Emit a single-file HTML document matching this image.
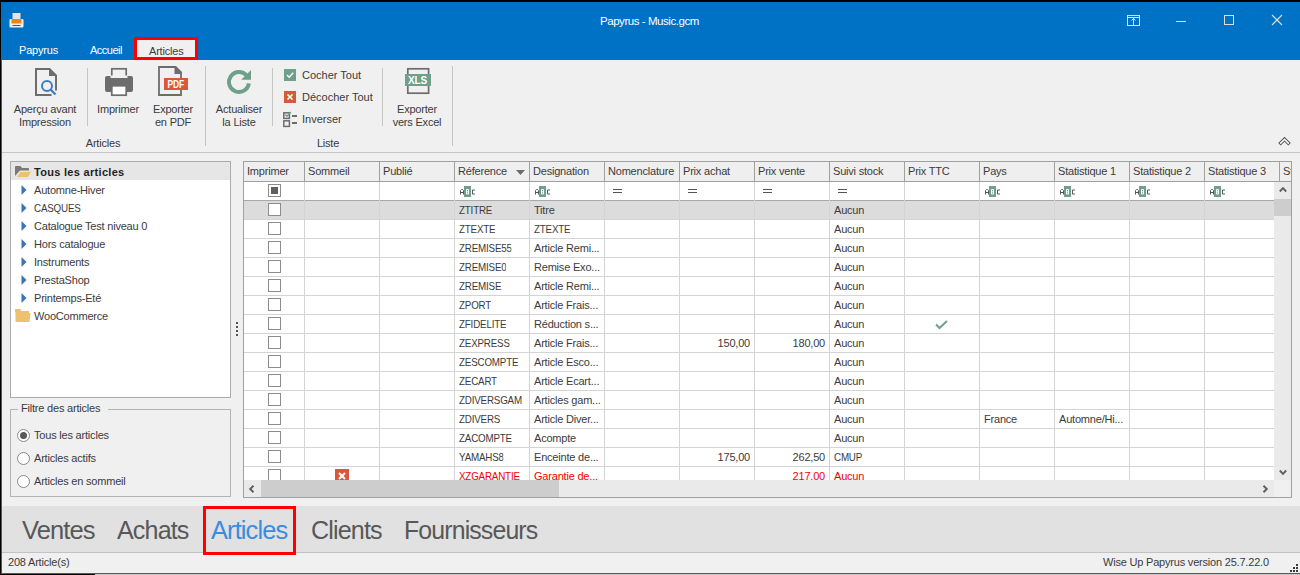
<!DOCTYPE html><html><head><meta charset="utf-8"><style>
*{margin:0;padding:0;box-sizing:border-box}
html,body{width:1300px;height:575px;overflow:hidden;background:#000}
body{font-family:"Liberation Sans",sans-serif;font-size:11px;color:#3B3B3B;position:relative;letter-spacing:-0.2px}
.a{position:absolute;white-space:nowrap}
.rl{text-align:center;line-height:13px}
.c{position:absolute;white-space:nowrap;overflow:hidden;line-height:19px;height:19px;padding-top:1px}
.cb{position:absolute;width:13px;height:13px;border:1px solid #8C8C8C;background:#fff}
.vl{position:absolute;width:1px;background:#D4D4D4}
.hl{position:absolute;height:1px;background:#D4D4D4}
.u{transform:scaleX(.89);transform-origin:0 0}
.sep{position:absolute;width:1px;background:#C6C6C6}
svg{position:absolute;overflow:visible}
</style></head><body>
<div class="a" style="left:1px;top:2px;width:1299px;height:572px;background:#0072C6"></div>
<div class="a" style="left:95px;top:574px;width:1205px;height:1px;background:#C8C4C0"></div>
<div class="a" style="left:0;top:0;width:1px;height:575px;background:#000"></div>
<div class="a" style="left:600px;top:15px;color:#fff;font-size:11.5px;letter-spacing:-0.45px">Papyrus - Music.gcm</div>
<svg style="left:9px;top:13px" width="15" height="15" viewBox="0 0 15 15">
<rect x="3.5" y="0" width="8" height="6" fill="#E4E4E4"/>
<rect x="0.5" y="6" width="14" height="8.5" rx="1" fill="#EFEFEF"/>
<rect x="2.5" y="6" width="10" height="4.5" fill="#E38A12"/>
<rect x="3.5" y="12" width="8" height="1" fill="#555"/>
</svg>
<svg style="left:1127px;top:15px" width="13" height="11" viewBox="0 0 13 11">
<rect x="0.5" y="0.5" width="12" height="10" fill="none" stroke="#E4DDD6" stroke-width="1"/>
<line x1="0.5" y1="2.5" x2="12.5" y2="2.5" stroke="#E4DDD6"/>
<line x1="6.5" y1="3" x2="6.5" y2="10.5" stroke="#E4DDD6"/>
<polyline points="4.5,5.5 6.5,3.5 8.5,5.5" fill="none" stroke="#E4DDD6"/>
</svg>
<div class="a" style="left:1176px;top:21px;width:10px;height:1px;background:#E4DDD6"></div>
<div class="a" style="left:1224px;top:15px;width:10px;height:10px;border:1px solid #E4DDD6"></div>
<svg style="left:1272px;top:15px" width="10" height="10" viewBox="0 0 10 10">
<line x1="0" y1="0" x2="10" y2="10" stroke="#E4DDD6" stroke-width="1.1"/>
<line x1="10" y1="0" x2="0" y2="10" stroke="#E4DDD6" stroke-width="1.1"/>
</svg>
<div class="a" style="left:19px;top:44px;color:#fff">Papyrus</div>
<div class="a" style="left:90px;top:44px;color:#fff;letter-spacing:-0.5px">Accueil</div>
<div class="a" style="left:134px;top:37px;width:64px;height:23px;background:#F0F0F0;border:3px solid #FF0000"></div>
<div class="a" style="left:149px;top:45px">Articles</div>
<div class="a" style="left:2px;top:60px;width:1298px;height:93px;background:#F0F0F0;border-bottom:1px solid #C6C6C6"></div>
<div class="a" style="left:2px;top:153px;width:1298px;height:353px;background:#F0F0F0"></div>
<div class="a" style="left:2px;top:506px;width:1298px;height:47px;background:#E1E1E1;border-bottom:1px solid #C2C2C2"></div>
<div class="a" style="left:2px;top:553px;width:1298px;height:20px;background:#F0F0F0"></div>
<svg style="left:35px;top:68px" width="22" height="28" viewBox="0 0 22 28">
<path d="M16.5,27 H1 V1 H14.5 L21,7.5 V22.5" fill="none" stroke="#6D6D6D" stroke-width="2"/>
<path d="M14,0 V8 H22 Z" fill="#6D6D6D"/>
<circle cx="12" cy="18" r="5" fill="none" stroke="#3C7DC4" stroke-width="2"/>
<line x1="15.3" y1="21.3" x2="20.5" y2="26.5" stroke="#3C7DC4" stroke-width="2.3"/>
</svg>
<div class="sep" style="left:87px;top:68px;height:58px"></div>
<svg style="left:105px;top:68px" width="28" height="28" viewBox="0 0 28 28">
<rect x="6.8" y="0.8" width="14.4" height="9" fill="none" stroke="#6D6D6D" stroke-width="1.7"/>
<rect x="0" y="8" width="28" height="16" rx="2" fill="#6D6D6D"/>
<rect x="5.5" y="7.5" width="17" height="2.5" fill="#F0F0F0"/>
<rect x="6.8" y="17.8" width="14.4" height="9.4" fill="#fff" stroke="#6D6D6D" stroke-width="1.7"/>
</svg>
<svg style="left:158px;top:66px" width="31" height="30" viewBox="0 0 31 30">
<path d="M1,1 H17 L23,7 V29 H1 Z" fill="none" stroke="#6D6D6D" stroke-width="1.8"/>
<path d="M16.5,0 H18 L24,6 V8 H16.5 Z" fill="#6D6D6D"/>
<rect x="6" y="12" width="24" height="12" fill="#D9583B"/>
<text x="9.6" y="22" font-family="Liberation Sans" font-weight="bold" font-size="10.5" fill="#fff" textLength="16.5" lengthAdjust="spacingAndGlyphs">PDF</text>
</svg>
<div class="a rl" style="left:5px;top:103px;width:80px">Aperçu avant<br>Impression</div>
<div class="a rl" style="left:88px;top:103px;width:60px">Imprimer</div>
<div class="a rl" style="left:143px;top:103px;width:60px">Exporter<br>en PDF</div>
<div class="a rl" style="left:63px;top:137px;width:80px">Articles</div>
<div class="sep" style="left:205px;top:66px;height:80px"></div>
<svg style="left:226px;top:69px" width="26" height="26" viewBox="0 0 26 26">
<path d="M22.9,14.4 A10,10 0 1 1 20.7,6.6" fill="none" stroke="#6FA08B" stroke-width="3.9"/>
<path d="M25,1 V10.8 H15.2 Z" fill="#6FA08B"/>
</svg>
<div class="a rl" style="left:209px;top:103px;width:60px">Actualiser<br>la Liste</div>
<div class="sep" style="left:272px;top:68px;height:58px"></div>
<svg style="left:284px;top:69px" width="12" height="12" viewBox="0 0 12 12">
<rect width="12" height="12" fill="#6FA08B"/>
<polyline points="3,6 5.2,8.2 9.2,3.8" fill="none" stroke="#fff" stroke-width="1.4"/>
</svg>
<svg style="left:284px;top:91px" width="12" height="12" viewBox="0 0 12 12">
<rect width="12" height="12" fill="#D9583B"/>
<line x1="3.5" y1="3.5" x2="8.5" y2="8.5" stroke="#fff" stroke-width="1.6"/>
<line x1="8.5" y1="3.5" x2="3.5" y2="8.5" stroke="#fff" stroke-width="1.6"/>
</svg>
<svg style="left:283px;top:112px" width="15" height="16" viewBox="0 0 15 16">
<rect x="0.8" y="0.8" width="5.6" height="5.6" fill="none" stroke="#6D6D6D" stroke-width="1.5"/>
<polyline points="2.3,2.5 4,4.3 7.8,0" fill="none" stroke="#6FA08B" stroke-width="1.4"/>
<rect x="0.8" y="8.8" width="5.6" height="5.6" fill="none" stroke="#6D6D6D" stroke-width="1.5"/>
<rect x="9" y="3" width="5" height="2" fill="#6D6D6D"/>
<rect x="9" y="10" width="5" height="2" fill="#6D6D6D"/>
</svg>
<div class="a" style="left:302px;top:69px;letter-spacing:0">Cocher Tout</div>
<div class="a" style="left:302px;top:91px;letter-spacing:0">Décocher Tout</div>
<div class="a" style="left:302px;top:113px;letter-spacing:0">Inverser</div>
<div class="a rl" style="left:288px;top:137px;width:80px">Liste</div>
<div class="sep" style="left:382px;top:68px;height:58px"></div>
<svg style="left:405px;top:68px" width="27" height="26" viewBox="0 0 27 26">
<rect x="2.8" y="0.8" width="20.8" height="24.4" fill="none" stroke="#6D6D6D" stroke-width="1.7"/>
<rect x="0" y="6" width="26" height="12" fill="#6FA08B"/>
<text x="3" y="15.8" font-family="Liberation Sans" font-weight="bold" font-size="10.5" fill="#fff" textLength="19" lengthAdjust="spacingAndGlyphs">XLS</text>
</svg>
<div class="a rl" style="left:382px;top:103px;width:70px">Exporter<br>vers Excel</div>
<div class="sep" style="left:452px;top:66px;height:80px"></div>
<svg style="left:1278px;top:136px" width="13" height="10" viewBox="0 0 13 10">
<polyline points="2.7,7.1 6.5,3.3 10.3,7.1" fill="none" stroke="#555" stroke-width="3.5" stroke-linecap="square"/>
<polyline points="2.7,7.1 6.5,3.3 10.3,7.1" fill="none" stroke="#fff" stroke-width="1.5" stroke-linecap="square"/>
</svg>
<div class="a" style="left:10px;top:161px;width:221px;height:237px;background:#fff;border:1px solid #ABABAB"></div>
<div class="a" style="left:11px;top:162px;width:219px;height:18px;background:#E6E6E6"></div>
<svg style="left:15px;top:166px" width="16" height="11" viewBox="0 0 16 11">
<path d="M0,1 Q0,0 1,0 H5.5 L7,2 H13 Q14,2 14,3 V4.5 H5 L0,10 Z" fill="#7A7A7A"/>
<path d="M5.5,6 H16 L13,11 H2 Z" fill="#EDC16E"/>
</svg>
<div class="a" style="left:34px;top:166px;font-weight:bold;letter-spacing:0.3px;color:#1E1E1E">Tous les articles</div>
<svg style="left:21px;top:185px" width="6" height="10" viewBox="0 0 6 10"><path d="M0.5,0 L5.5,5 L0.5,10 Z" fill="#3D73B5"/></svg>
<div class="a" style="left:34px;top:184px">Automne-Hiver</div>
<svg style="left:21px;top:203px" width="6" height="10" viewBox="0 0 6 10"><path d="M0.5,0 L5.5,5 L0.5,10 Z" fill="#3D73B5"/></svg>
<div class="a u" style="left:34px;top:202px">CASQUES</div>
<svg style="left:21px;top:221px" width="6" height="10" viewBox="0 0 6 10"><path d="M0.5,0 L5.5,5 L0.5,10 Z" fill="#3D73B5"/></svg>
<div class="a" style="left:34px;top:220px">Catalogue Test niveau 0</div>
<svg style="left:21px;top:239px" width="6" height="10" viewBox="0 0 6 10"><path d="M0.5,0 L5.5,5 L0.5,10 Z" fill="#3D73B5"/></svg>
<div class="a" style="left:34px;top:238px">Hors catalogue</div>
<svg style="left:21px;top:257px" width="6" height="10" viewBox="0 0 6 10"><path d="M0.5,0 L5.5,5 L0.5,10 Z" fill="#3D73B5"/></svg>
<div class="a" style="left:34px;top:256px">Instruments</div>
<svg style="left:21px;top:275px" width="6" height="10" viewBox="0 0 6 10"><path d="M0.5,0 L5.5,5 L0.5,10 Z" fill="#3D73B5"/></svg>
<div class="a" style="left:34px;top:274px">PrestaShop</div>
<svg style="left:21px;top:293px" width="6" height="10" viewBox="0 0 6 10"><path d="M0.5,0 L5.5,5 L0.5,10 Z" fill="#3D73B5"/></svg>
<div class="a" style="left:34px;top:292px">Printemps-Eté</div>
<svg style="left:15px;top:309px" width="16" height="13" viewBox="0 0 16 13">
<path d="M0,0.5 Q0,0 0.5,0 H5.5 L6,2 H14 V4 H0 Z" fill="#EDC16E"/>
<path d="M0.5,4 H15.5 L14.5,13 H0.8 Z" fill="#EDC16E"/>
<path d="M0,3 H1 V13 H0.5 Z" fill="#F5DDA8"/>
</svg>
<div class="a" style="left:34px;top:310px">WooCommerce</div>
<div class="a" style="left:236px;top:322px;width:2px;height:2px;background:#555"></div>
<div class="a" style="left:236px;top:326px;width:2px;height:2px;background:#555"></div>
<div class="a" style="left:236px;top:330px;width:2px;height:2px;background:#555"></div>
<div class="a" style="left:236px;top:334px;width:2px;height:2px;background:#555"></div>
<div class="a" style="left:10px;top:409px;width:221px;height:88px;border:1px solid #B4B4B4"></div>
<div class="a" style="left:18px;top:401px;width:90px;height:12px;background:#F0F0F0"></div>
<div class="a" style="left:21px;top:402px">Filtre des articles</div>
<div class="a" style="left:17px;top:429px;width:13px;height:13px;border-radius:50%;border:1px solid #8A8A8A;background:#fff"></div>
<div class="a" style="left:20px;top:432px;width:7px;height:7px;border-radius:50%;background:#5A5A5A"></div>
<div class="a" style="left:34px;top:429px">Tous les articles</div>
<div class="a" style="left:17px;top:452px;width:13px;height:13px;border-radius:50%;border:1px solid #8A8A8A;background:#fff"></div>
<div class="a" style="left:34px;top:452px">Articles actifs</div>
<div class="a" style="left:17px;top:475px;width:13px;height:13px;border-radius:50%;border:1px solid #8A8A8A;background:#fff"></div>
<div class="a" style="left:34px;top:475px">Articles en sommeil</div>
<div class="a" style="left:8px;top:556px">208 Article(s)</div>
<div class="a" style="left:1103px;top:556px">Wise Up Papyrus version 25.7.22.0</div>
<div class="a" style="left:1296px;top:564px;width:2px;height:2px;background:#3A3A3A"></div>
<div class="a" style="left:1293px;top:567px;width:2px;height:2px;background:#3A3A3A"></div>
<div class="a" style="left:1296px;top:567px;width:2px;height:2px;background:#3A3A3A"></div>
<div class="a" style="left:1290px;top:570px;width:2px;height:2px;background:#3A3A3A"></div>
<div class="a" style="left:1293px;top:570px;width:2px;height:2px;background:#3A3A3A"></div>
<div class="a" style="left:1296px;top:570px;width:2px;height:2px;background:#3A3A3A"></div>
<div class="a" style="left:22px;top:515px;font-size:26px;letter-spacing:-0.9px;color:#585858;transform:scaleX(0.981);transform-origin:0 0">Ventes</div>
<div class="a" style="left:117px;top:515px;font-size:26px;letter-spacing:-0.9px;color:#585858;transform:scaleX(0.965);transform-origin:0 0">Achats</div>
<div class="a" style="left:211px;top:515px;font-size:26px;letter-spacing:-0.9px;color:#3A8DDE;transform:scaleX(0.977);transform-origin:0 0">Articles</div>
<div class="a" style="left:311px;top:515px;font-size:26px;letter-spacing:-0.9px;color:#585858;transform:scaleX(0.967);transform-origin:0 0">Clients</div>
<div class="a" style="left:404px;top:515px;font-size:26px;letter-spacing:-0.9px;color:#585858;transform:scaleX(0.956);transform-origin:0 0">Fournisseurs</div>
<div class="a" style="left:203px;top:506px;width:93px;height:49px;border:3px solid #FF0000"></div>
<div class="a" style="left:243px;top:161px;width:1049px;height:337px;background:#fff;border:1px solid #A0A0A0"></div>
<div class="a" style="left:244px;top:162px;width:1047px;height:19px;background:#EFEFEF"></div>
<div class="hl" style="left:244px;top:181px;width:1047px;background:#A0A0A0"></div>
<div class="hl" style="left:244px;top:200px;width:1030px;background:#A8A8A8"></div>
<div class="a" style="left:244px;top:201px;width:1030px;height:18px;background:#DCDCDC"></div>
<div class="hl" style="left:244px;top:219px;width:1030px"></div>
<div class="hl" style="left:244px;top:238px;width:1030px"></div>
<div class="hl" style="left:244px;top:257px;width:1030px"></div>
<div class="hl" style="left:244px;top:276px;width:1030px"></div>
<div class="hl" style="left:244px;top:295px;width:1030px"></div>
<div class="hl" style="left:244px;top:314px;width:1030px"></div>
<div class="hl" style="left:244px;top:333px;width:1030px"></div>
<div class="hl" style="left:244px;top:352px;width:1030px"></div>
<div class="hl" style="left:244px;top:371px;width:1030px"></div>
<div class="hl" style="left:244px;top:390px;width:1030px"></div>
<div class="hl" style="left:244px;top:409px;width:1030px"></div>
<div class="hl" style="left:244px;top:428px;width:1030px"></div>
<div class="hl" style="left:244px;top:447px;width:1030px"></div>
<div class="hl" style="left:244px;top:466px;width:1030px"></div>
<div class="vl" style="left:304px;top:182px;height:298px"></div>
<div class="vl" style="left:379px;top:182px;height:298px"></div>
<div class="vl" style="left:454px;top:182px;height:298px"></div>
<div class="vl" style="left:529px;top:182px;height:298px"></div>
<div class="vl" style="left:604px;top:182px;height:298px"></div>
<div class="vl" style="left:679px;top:182px;height:298px"></div>
<div class="vl" style="left:754px;top:182px;height:298px"></div>
<div class="vl" style="left:829px;top:182px;height:298px"></div>
<div class="vl" style="left:904px;top:182px;height:298px"></div>
<div class="vl" style="left:979px;top:182px;height:298px"></div>
<div class="vl" style="left:1054px;top:182px;height:298px"></div>
<div class="vl" style="left:1129px;top:182px;height:298px"></div>
<div class="vl" style="left:1204px;top:182px;height:298px"></div>
<div class="vl" style="left:304px;top:162px;height:19px;background:#A0A0A0"></div>
<div class="vl" style="left:379px;top:162px;height:19px;background:#A0A0A0"></div>
<div class="vl" style="left:454px;top:162px;height:19px;background:#A0A0A0"></div>
<div class="vl" style="left:529px;top:162px;height:19px;background:#A0A0A0"></div>
<div class="vl" style="left:604px;top:162px;height:19px;background:#A0A0A0"></div>
<div class="vl" style="left:679px;top:162px;height:19px;background:#A0A0A0"></div>
<div class="vl" style="left:754px;top:162px;height:19px;background:#A0A0A0"></div>
<div class="vl" style="left:829px;top:162px;height:19px;background:#A0A0A0"></div>
<div class="vl" style="left:904px;top:162px;height:19px;background:#A0A0A0"></div>
<div class="vl" style="left:979px;top:162px;height:19px;background:#A0A0A0"></div>
<div class="vl" style="left:1054px;top:162px;height:19px;background:#A0A0A0"></div>
<div class="vl" style="left:1129px;top:162px;height:19px;background:#A0A0A0"></div>
<div class="vl" style="left:1204px;top:162px;height:19px;background:#A0A0A0"></div>
<div class="vl" style="left:1279px;top:162px;height:19px;background:#A0A0A0"></div>
<div class="c" style="left:247px;top:162px;width:56px;height:19px;line-height:19px;padding-top:0">Imprimer</div>
<div class="c" style="left:308px;top:162px;width:70px;height:19px;line-height:19px;padding-top:0">Sommeil</div>
<div class="c" style="left:383px;top:162px;width:70px;height:19px;line-height:19px;padding-top:0">Publié</div>
<div class="c" style="left:458px;top:162px;width:70px;height:19px;line-height:19px;padding-top:0">Réference</div>
<div class="c" style="left:533px;top:162px;width:70px;height:19px;line-height:19px;padding-top:0">Designation</div>
<div class="c" style="left:608px;top:162px;width:70px;height:19px;line-height:19px;padding-top:0">Nomenclature</div>
<div class="c" style="left:683px;top:162px;width:70px;height:19px;line-height:19px;padding-top:0">Prix achat</div>
<div class="c" style="left:758px;top:162px;width:70px;height:19px;line-height:19px;padding-top:0">Prix vente</div>
<div class="c" style="left:833px;top:162px;width:70px;height:19px;line-height:19px;padding-top:0">Suivi stock</div>
<div class="c" style="left:908px;top:162px;width:70px;height:19px;line-height:19px;padding-top:0">Prix TTC</div>
<div class="c" style="left:983px;top:162px;width:70px;height:19px;line-height:19px;padding-top:0">Pays</div>
<div class="c" style="left:1058px;top:162px;width:70px;height:19px;line-height:19px;padding-top:0">Statistique 1</div>
<div class="c" style="left:1133px;top:162px;width:70px;height:19px;line-height:19px;padding-top:0">Statistique 2</div>
<div class="c" style="left:1208px;top:162px;width:70px;height:19px;line-height:19px;padding-top:0">Statistique 3</div>
<div class="c" style="left:1283px;top:162px;width:8px;height:19px;line-height:19px;padding-top:0">St</div>
<svg style="left:516px;top:170px" width="9" height="5" viewBox="0 0 9 5"><path d="M0,0 H9 L4.5,5 Z" fill="#6D6D6D"/></svg>
<div class="cb" style="left:268px;top:184px"></div>
<div class="a" style="left:271px;top:187px;width:7px;height:7px;background:#5F5F5F"></div>
<svg style="left:460px;top:186px" width="16" height="11" viewBox="0 0 16 11">
<path d="M0.5,8.5 V4.5 L1.5,3.5 H2.5 L3.5,4.5 V8.5 M0.5,6.5 H3.5" fill="none" stroke="#555" stroke-width="1"/>
<rect x="4" y="0" width="7" height="11" fill="#6FA08B"/>
<path d="M6.5,8 V3.5 H8.5 V8 Z M6.5,5.8 H8.5" fill="none" stroke="#fff" stroke-width="1"/>
<path d="M15,4 H12.5 V8 H15" fill="none" stroke="#555" stroke-width="1"/>
</svg>
<svg style="left:535px;top:186px" width="16" height="11" viewBox="0 0 16 11">
<path d="M0.5,8.5 V4.5 L1.5,3.5 H2.5 L3.5,4.5 V8.5 M0.5,6.5 H3.5" fill="none" stroke="#555" stroke-width="1"/>
<rect x="4" y="0" width="7" height="11" fill="#6FA08B"/>
<path d="M6.5,8 V3.5 H8.5 V8 Z M6.5,5.8 H8.5" fill="none" stroke="#fff" stroke-width="1"/>
<path d="M15,4 H12.5 V8 H15" fill="none" stroke="#555" stroke-width="1"/>
</svg>
<svg style="left:985px;top:186px" width="16" height="11" viewBox="0 0 16 11">
<path d="M0.5,8.5 V4.5 L1.5,3.5 H2.5 L3.5,4.5 V8.5 M0.5,6.5 H3.5" fill="none" stroke="#555" stroke-width="1"/>
<rect x="4" y="0" width="7" height="11" fill="#6FA08B"/>
<path d="M6.5,8 V3.5 H8.5 V8 Z M6.5,5.8 H8.5" fill="none" stroke="#fff" stroke-width="1"/>
<path d="M15,4 H12.5 V8 H15" fill="none" stroke="#555" stroke-width="1"/>
</svg>
<svg style="left:1060px;top:186px" width="16" height="11" viewBox="0 0 16 11">
<path d="M0.5,8.5 V4.5 L1.5,3.5 H2.5 L3.5,4.5 V8.5 M0.5,6.5 H3.5" fill="none" stroke="#555" stroke-width="1"/>
<rect x="4" y="0" width="7" height="11" fill="#6FA08B"/>
<path d="M6.5,8 V3.5 H8.5 V8 Z M6.5,5.8 H8.5" fill="none" stroke="#fff" stroke-width="1"/>
<path d="M15,4 H12.5 V8 H15" fill="none" stroke="#555" stroke-width="1"/>
</svg>
<svg style="left:1135px;top:186px" width="16" height="11" viewBox="0 0 16 11">
<path d="M0.5,8.5 V4.5 L1.5,3.5 H2.5 L3.5,4.5 V8.5 M0.5,6.5 H3.5" fill="none" stroke="#555" stroke-width="1"/>
<rect x="4" y="0" width="7" height="11" fill="#6FA08B"/>
<path d="M6.5,8 V3.5 H8.5 V8 Z M6.5,5.8 H8.5" fill="none" stroke="#fff" stroke-width="1"/>
<path d="M15,4 H12.5 V8 H15" fill="none" stroke="#555" stroke-width="1"/>
</svg>
<svg style="left:1210px;top:186px" width="16" height="11" viewBox="0 0 16 11">
<path d="M0.5,8.5 V4.5 L1.5,3.5 H2.5 L3.5,4.5 V8.5 M0.5,6.5 H3.5" fill="none" stroke="#555" stroke-width="1"/>
<rect x="4" y="0" width="7" height="11" fill="#6FA08B"/>
<path d="M6.5,8 V3.5 H8.5 V8 Z M6.5,5.8 H8.5" fill="none" stroke="#fff" stroke-width="1"/>
<path d="M15,4 H12.5 V8 H15" fill="none" stroke="#555" stroke-width="1"/>
</svg>
<div class="a" style="left:613px;top:189px;width:9px;height:1px;background:#555"></div><div class="a" style="left:613px;top:192px;width:9px;height:1px;background:#555"></div>
<div class="a" style="left:688px;top:189px;width:9px;height:1px;background:#555"></div><div class="a" style="left:688px;top:192px;width:9px;height:1px;background:#555"></div>
<div class="a" style="left:763px;top:189px;width:9px;height:1px;background:#555"></div><div class="a" style="left:763px;top:192px;width:9px;height:1px;background:#555"></div>
<div class="a" style="left:838px;top:189px;width:9px;height:1px;background:#555"></div><div class="a" style="left:838px;top:192px;width:9px;height:1px;background:#555"></div>
<div class="cb" style="left:268px;top:203px"></div>
<div class="c u" style="left:459px;top:200px;height:19px;color:#3B3B3B">ZTITRE</div>
<div class="c" style="left:534px;top:200px;height:19px;color:#3B3B3B">Titre</div>
<div class="c" style="left:834px;top:200px;height:19px;color:#3B3B3B">Aucun</div>
<div class="cb" style="left:268px;top:222px"></div>
<div class="c u" style="left:459px;top:219px;height:19px;color:#3B3B3B">ZTEXTE</div>
<div class="c u" style="left:534px;top:219px;height:19px;color:#3B3B3B">ZTEXTE</div>
<div class="c" style="left:834px;top:219px;height:19px;color:#3B3B3B">Aucun</div>
<div class="cb" style="left:268px;top:241px"></div>
<div class="c u" style="left:459px;top:238px;height:19px;color:#3B3B3B">ZREMISE55</div>
<div class="c" style="left:534px;top:238px;height:19px;color:#3B3B3B">Article Remi...</div>
<div class="c" style="left:834px;top:238px;height:19px;color:#3B3B3B">Aucun</div>
<div class="cb" style="left:268px;top:260px"></div>
<div class="c u" style="left:459px;top:257px;height:19px;color:#3B3B3B">ZREMISE0</div>
<div class="c" style="left:534px;top:257px;height:19px;color:#3B3B3B">Remise Exo...</div>
<div class="c" style="left:834px;top:257px;height:19px;color:#3B3B3B">Aucun</div>
<div class="cb" style="left:268px;top:279px"></div>
<div class="c u" style="left:459px;top:276px;height:19px;color:#3B3B3B">ZREMISE</div>
<div class="c" style="left:534px;top:276px;height:19px;color:#3B3B3B">Article Remi...</div>
<div class="c" style="left:834px;top:276px;height:19px;color:#3B3B3B">Aucun</div>
<div class="cb" style="left:268px;top:298px"></div>
<div class="c u" style="left:459px;top:295px;height:19px;color:#3B3B3B">ZPORT</div>
<div class="c" style="left:534px;top:295px;height:19px;color:#3B3B3B">Article Frais...</div>
<div class="c" style="left:834px;top:295px;height:19px;color:#3B3B3B">Aucun</div>
<div class="cb" style="left:268px;top:317px"></div>
<div class="c u" style="left:459px;top:314px;height:19px;color:#3B3B3B">ZFIDELITE</div>
<div class="c" style="left:534px;top:314px;height:19px;color:#3B3B3B">Réduction s...</div>
<div class="c" style="left:834px;top:314px;height:19px;color:#3B3B3B">Aucun</div>
<div class="cb" style="left:268px;top:336px"></div>
<div class="c u" style="left:459px;top:333px;height:19px;color:#3B3B3B">ZEXPRESS</div>
<div class="c" style="left:534px;top:333px;height:19px;color:#3B3B3B">Article Frais...</div>
<div class="c" style="left:679px;top:333px;width:71px;height:19px;text-align:right;color:#3B3B3B">150,00</div>
<div class="c" style="left:754px;top:333px;width:71px;height:19px;text-align:right;color:#3B3B3B">180,00</div>
<div class="c" style="left:834px;top:333px;height:19px;color:#3B3B3B">Aucun</div>
<div class="cb" style="left:268px;top:355px"></div>
<div class="c u" style="left:459px;top:352px;height:19px;color:#3B3B3B">ZESCOMPTE</div>
<div class="c" style="left:534px;top:352px;height:19px;color:#3B3B3B">Article Esco...</div>
<div class="c" style="left:834px;top:352px;height:19px;color:#3B3B3B">Aucun</div>
<div class="cb" style="left:268px;top:374px"></div>
<div class="c u" style="left:459px;top:371px;height:19px;color:#3B3B3B">ZECART</div>
<div class="c" style="left:534px;top:371px;height:19px;color:#3B3B3B">Article Ecart...</div>
<div class="c" style="left:834px;top:371px;height:19px;color:#3B3B3B">Aucun</div>
<div class="cb" style="left:268px;top:393px"></div>
<div class="c u" style="left:459px;top:390px;height:19px;color:#3B3B3B">ZDIVERSGAM</div>
<div class="c" style="left:534px;top:390px;height:19px;color:#3B3B3B">Articles gam...</div>
<div class="c" style="left:834px;top:390px;height:19px;color:#3B3B3B">Aucun</div>
<div class="cb" style="left:268px;top:412px"></div>
<div class="c u" style="left:459px;top:409px;height:19px;color:#3B3B3B">ZDIVERS</div>
<div class="c" style="left:534px;top:409px;height:19px;color:#3B3B3B">Article Diver...</div>
<div class="c" style="left:834px;top:409px;height:19px;color:#3B3B3B">Aucun</div>
<div class="cb" style="left:268px;top:431px"></div>
<div class="c u" style="left:459px;top:428px;height:19px;color:#3B3B3B">ZACOMPTE</div>
<div class="c" style="left:534px;top:428px;height:19px;color:#3B3B3B">Acompte</div>
<div class="c" style="left:834px;top:428px;height:19px;color:#3B3B3B">Aucun</div>
<div class="cb" style="left:268px;top:450px"></div>
<div class="c u" style="left:459px;top:447px;height:19px;color:#3B3B3B">YAMAHS8</div>
<div class="c" style="left:534px;top:447px;height:19px;color:#3B3B3B">Enceinte de...</div>
<div class="c" style="left:679px;top:447px;width:71px;height:19px;text-align:right;color:#3B3B3B">175,00</div>
<div class="c" style="left:754px;top:447px;width:71px;height:19px;text-align:right;color:#3B3B3B">262,50</div>
<div class="c u" style="left:834px;top:447px;height:19px;color:#3B3B3B">CMUP</div>
<div class="cb" style="left:268px;top:469px"></div>
<div class="c u" style="left:459px;top:466px;height:14px;color:#F00000">XZGARANTIE</div>
<div class="c" style="left:534px;top:466px;height:14px;color:#F00000">Garantie de...</div>
<div class="c" style="left:754px;top:466px;width:71px;height:14px;text-align:right;color:#F00000">217,00</div>
<div class="c" style="left:834px;top:466px;height:14px;color:#F00000">Aucun</div>
<div class="c" style="left:984px;top:409px">France</div>
<div class="c" style="left:1059px;top:409px">Automne/Hi...</div>
<svg style="left:935px;top:320px" width="13" height="9" viewBox="0 0 13 9"><polyline points="1,4.5 4.5,8 12,1" fill="none" stroke="#6FA08B" stroke-width="2"/></svg>
<div class="a" style="left:335px;top:469px;width:14px;height:11px;overflow:hidden"><svg style="left:0;top:0" width="14" height="14" viewBox="0 0 14 14">
<rect width="14" height="14" fill="#D9583B"/>
<line x1="4" y1="4" x2="10" y2="10" stroke="#fff" stroke-width="2"/>
<line x1="10" y1="4" x2="4" y2="10" stroke="#fff" stroke-width="2"/>
</svg></div>
<div class="a" style="left:1274px;top:182px;width:17px;height:298px;background:#EAEAEA"></div>
<div class="a" style="left:1274px;top:199px;width:17px;height:17px;background:#CDCDCD"></div>
<svg style="left:1279px;top:187px" width="8" height="5" viewBox="0 0 8 5"><polyline points="0.8,4.5 4,1.2 7.2,4.5" fill="none" stroke="#606060" stroke-width="1.9"/></svg>
<svg style="left:1279px;top:470px" width="8" height="5" viewBox="0 0 8 5"><polyline points="0.8,0.5 4,3.8 7.2,0.5" fill="none" stroke="#606060" stroke-width="1.9"/></svg>
<div class="a" style="left:244px;top:480px;width:1030px;height:17px;background:#EAEAEA"></div>
<div class="a" style="left:261px;top:480px;width:298px;height:17px;background:#CDCDCD"></div>
<div class="a" style="left:1274px;top:480px;width:17px;height:17px;background:#F0F0F0"></div>
<svg style="left:249px;top:485px" width="5" height="8" viewBox="0 0 5 8"><polyline points="4.5,0.8 1.2,4 4.5,7.2" fill="none" stroke="#606060" stroke-width="1.9"/></svg>
<svg style="left:1263px;top:485px" width="5" height="8" viewBox="0 0 5 8"><polyline points="0.5,0.8 3.8,4 0.5,7.2" fill="none" stroke="#606060" stroke-width="1.9"/></svg>
</body></html>
